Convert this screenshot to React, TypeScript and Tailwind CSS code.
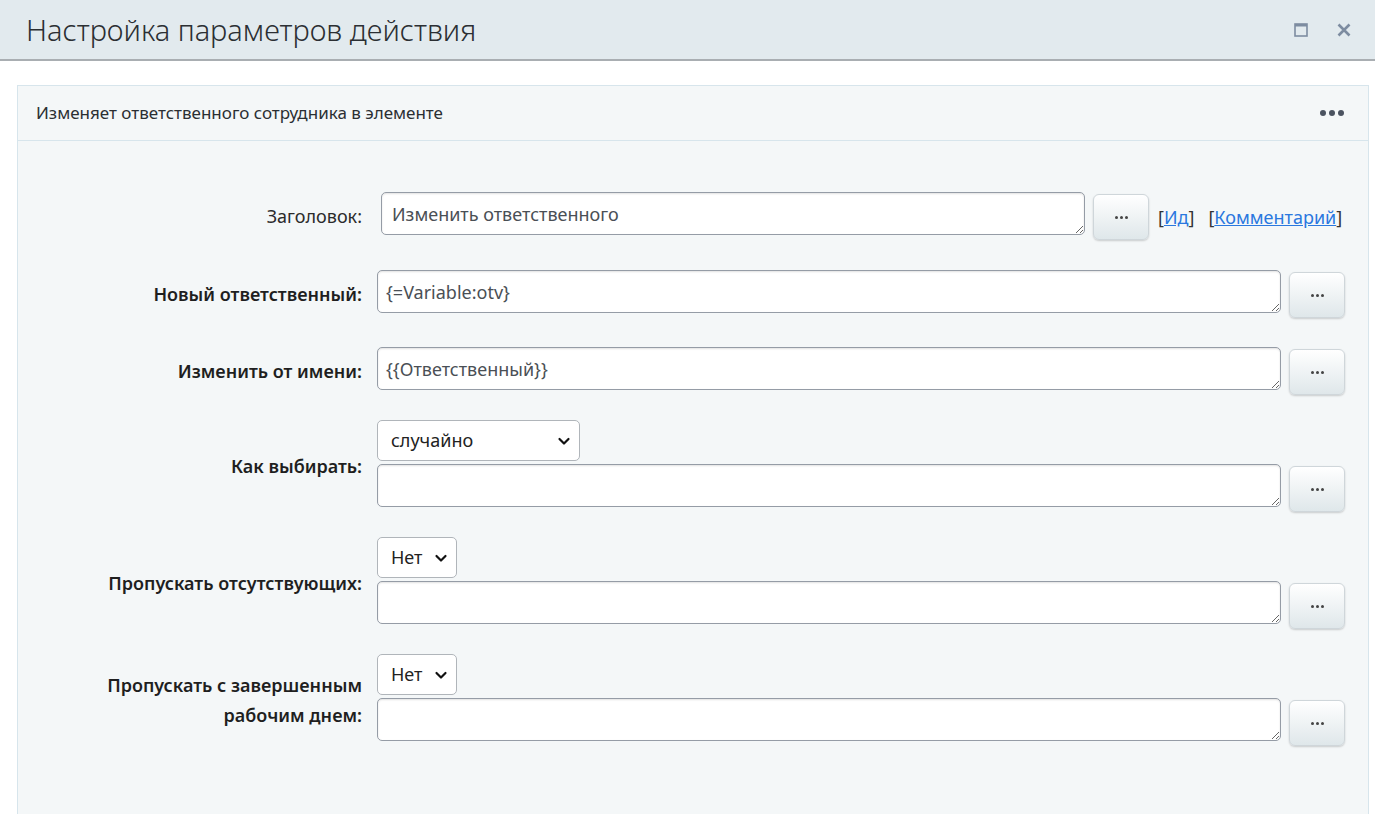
import React from 'react';

const font = { fontFamily: '"Noto Sans", "Open Sans", Arial, sans-serif' };

const DotsButton: React.FC = () => (
  <button
    type="button"
    className="mt-[2px] h-[46px] w-[56px] shrink-0 rounded-[6px] border border-[#cfd6da] bg-gradient-to-b from-[#ffffff] to-[#dfe7ea] shadow-[0_1px_2px_rgba(0,0,0,0.18)] flex items-center justify-center"
  >
    <span className="flex gap-[2px]">
      <span className="h-[3px] w-[3px] rounded-full bg-[#444]" />
      <span className="h-[3px] w-[3px] rounded-full bg-[#444]" />
      <span className="h-[3px] w-[3px] rounded-full bg-[#444]" />
    </span>
  </button>
);

const Field: React.FC<{ value?: string; wide?: boolean }> = ({ value = '', wide = true }) => (
  <textarea
    defaultValue={value}
    className={`${wide ? 'w-[904px] pl-[8px]' : 'w-[704px] pl-[10px]'} h-[43px] rounded-[5px] border border-[#959ca6] bg-white pt-[9px] text-[18px] leading-[24px] text-[#4a4f55] shadow-[inset_0_1px_2px_rgba(0,0,0,0.12)] outline-none`}
    style={font}
  />
);

const Select: React.FC<{ value: string; width: string }> = ({ value, width }) => (
  <div
    className={`${width} mb-[3px] flex h-[41px] items-center justify-between rounded-[5px] border border-[#b0b5ba] bg-white pl-[13px] pr-[8px] text-[18px] text-[#222]`}
  >
    <span>{value}</span>
    <svg width="14" height="14" viewBox="0 0 14 14" fill="none">
      <path d="M2.5 5l4.5 4.5L11.5 5" stroke="#111" strokeWidth="2.2" strokeLinecap="round" strokeLinejoin="round" />
    </svg>
  </div>
);

type Row = {
  label: React.ReactNode;
  value?: string;
  select?: { value: string; width: string };
  gap: string;
};

const rows: Row[] = [
  { label: 'Новый ответственный:', value: '{=Variable:otv}', gap: 'mt-[30px]' },
  { label: 'Изменить от имени:', value: '{{Ответственный}}', gap: 'mt-[29px]' },
  { label: 'Как выбирать:', select: { value: 'случайно', width: 'w-[203px]' }, gap: 'mt-[25px]' },
  { label: 'Пропускать отсутствующих:', select: { value: 'Нет', width: 'w-[80px]' }, gap: 'mt-[25px]' },
  {
    label: (
      <>
        Пропускать с завершенным
        <br />
        рабочим днем:
      </>
    ),
    select: { value: 'Нет', width: 'w-[80px]' },
    gap: 'mt-[25px]',
  },
];

export default function App() {
  return (
    <div className="h-[814px] w-[1375px] overflow-hidden bg-white text-[#222]" style={font}>
      {/* window title */}
      <div className="flex h-[61px] items-center justify-between border-b-2 border-[#a9aeb2] bg-[#e2eaee] pl-[26px] pr-[24px]">
        <h1 className="text-[29px] font-light text-[#2b2f33]">Настройка параметров действия</h1>
        <div className="flex items-center gap-[29px]">
          <svg width="14" height="14" viewBox="0 0 14 14" fill="none">
            <rect x="1" y="1" width="12" height="12" stroke="#7d8ca0" strokeWidth="1.6" />
            <rect x="1" y="1" width="12" height="2.5" fill="#7d8ca0" />
          </svg>
          <svg width="14" height="14" viewBox="0 0 14 14" fill="none">
            <path d="M1.5 1.5l11 11M12.5 1.5l-11 11" stroke="#7d8ca0" strokeWidth="2.6" />
          </svg>
        </div>
      </div>

      <div className="pl-[17px] pr-[6px] pt-[24px]">
        <div className="h-[760px] border border-b-0 border-[#d7e5ec] bg-[#f4f7f8]">
          <div className="flex h-[55px] items-center justify-between border-b border-[#d7e5ec] pl-[18px] pr-[24px]">
            <span className="text-[17px] text-[#2b2f33]">Изменяет ответственного сотрудника в элементе</span>
            <span className="flex gap-[3px]">
              <span className="h-[6px] w-[6px] rounded-full bg-[#4b5360]" />
              <span className="h-[6px] w-[6px] rounded-full bg-[#4b5360]" />
              <span className="h-[6px] w-[6px] rounded-full bg-[#4b5360]" />
            </span>
          </div>

          <div className="pt-[51px]">
            {/* title row */}
            <div className="grid grid-cols-[344px_1fr] items-center gap-x-[19px]">
              <div className="text-right text-[18px] text-[#2b2b2b]">Заголовок:</div>
              <div className="flex items-start">
                <Field value="Изменить ответственного" wide={false} />
                <div className="ml-[8px]">
                  <DotsButton />
                </div>
                <div className="ml-[9px] mt-[12px] flex gap-[14px] text-[18px] text-[#333]">
                  <span>
                    [<a href="#" className="text-[#2a78df] underline">Ид</a>]
                  </span>
                  <span>
                    [<a href="#" className="text-[#2a78df] underline">Комментарий</a>]
                  </span>
                </div>
              </div>
            </div>

            {rows.map((r, i) => (
              <div key={i} className={`${r.gap} grid grid-cols-[344px_1fr] items-center gap-x-[15px]`}>
                <div className="text-right text-[18px] leading-[30px] font-semibold text-[#1f1f1f]">{r.label}</div>
                <div className="flex flex-col items-start">
                  {r.select && <Select value={r.select.value} width={r.select.width} />}
                  <div className="flex items-start gap-[8px]">
                    <Field value={r.value} />
                    <DotsButton />
                  </div>
                </div>
              </div>
            ))}
          </div>
        </div>
      </div>
    </div>
  );
}
